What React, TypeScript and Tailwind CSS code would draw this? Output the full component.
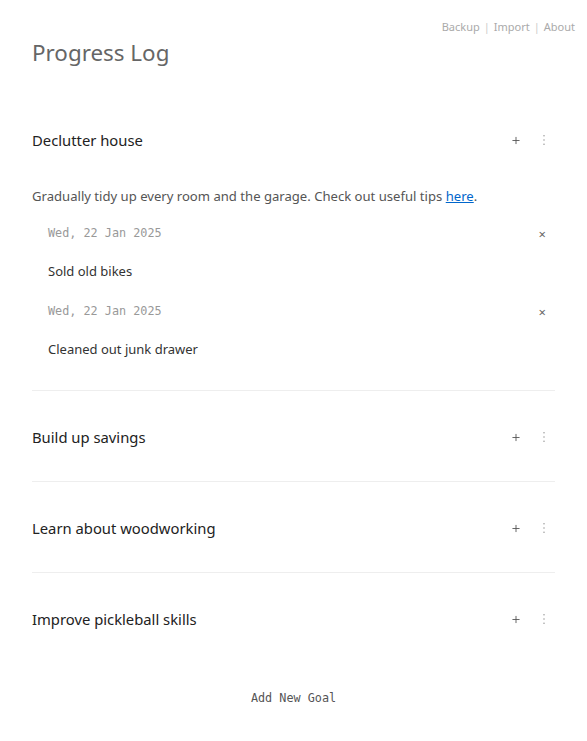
import React from "react";

const goals = [
  { title: "Build up savings" },
  { title: "Learn about woodworking" },
  { title: "Improve pickleball skills" },
];

function Actions() {
  return (
    <div className="flex items-center gap-[20px] text-[#555]">
      <span className="w-[8px] flex justify-center">
        <svg width="9" height="9" viewBox="0 0 9 9"><path d="M4.5 0.5v8M0.5 4.5h8" stroke="#555" strokeWidth="1" /></svg>
      </span>
      <span className="w-[8px] flex justify-center mr-[7px]">
        <svg width="2" height="10" viewBox="0 0 2 10"><rect x="0.5" y="0" width="1" height="1.4" fill="#888" /><rect x="0.5" y="4.3" width="1" height="1.4" fill="#888" /><rect x="0.5" y="8.6" width="1" height="1.4" fill="#888" /></svg>
      </span>
    </div>
  );
}

function Entry({ text }: { text: string }) {
  return (
    <div className="pl-4">
      <div className="flex items-center justify-between h-[20px]">
        <span className="text-[11.8px] text-[#999]" style={{ fontFamily: '"DejaVu Sans Mono", monospace' }}>Wed, 22 Jan 2025</span>
        <span className="mr-[9px] text-[#666] text-[13px] leading-none">×</span>
      </div>
      <div className="mt-[18px] h-[20px] flex items-center text-[13px] text-[#333]">{text}</div>
    </div>
  );
}

export default function App() {
  return (
    <div className="min-h-[741px] bg-white" style={{ fontFamily: '"Noto Sans", sans-serif' }}>
      <div className="flex justify-end pt-[18px] pr-[12px] text-[11px] text-[#aaa] h-[20px] leading-[18px]">
        <span>Backup</span>
        <span className="mx-[4px] text-[#ccc]">|</span>
        <span>Import</span>
        <span className="mx-[4px] text-[#ccc]">|</span>
        <span>About</span>
      </div>
      <div className="px-8">
        <h1 className="mt-[17px] text-[22.4px] leading-[32px] text-[#666]">Progress Log</h1>
        <section className="pt-[59px] pb-[30px] border-b border-[#eee]">
          <div className="flex items-center justify-between h-[24px]">
            <h2 className="text-[14.8px] text-[#222]">Declutter house</h2>
            <Actions />
          </div>
          <p className="mt-[34px] text-[13.1px] text-[#555] leading-[20px]">
            Gradually tidy up every room and the garage. Check out useful tips{" "}
            <a className="text-[#0066cc] underline" href="#">here</a>.
          </p>
          <div className="mt-[18px]">
            <Entry text="Sold old bikes" />
            <div className="mt-[20px]">
              <Entry text="Cleaned out junk drawer" />
            </div>
          </div>
        </section>
        {goals.map((g, i) => (
          <section key={g.title} className={`pt-[34px] pb-[32px] ${i < goals.length - 1 ? "border-b border-[#eee]" : ""}`}>
            <div className="flex items-center justify-between h-[24px]">
              <h2 className="text-[14.8px] text-[#222]">{g.title}</h2>
              <Actions />
            </div>
          </section>
        ))}
        <div className="mt-[27px] flex justify-center text-[11.8px] text-[#555]" style={{ fontFamily: '"DejaVu Sans Mono", monospace' }}>
          Add New Goal
        </div>
      </div>
    </div>
  );
}
